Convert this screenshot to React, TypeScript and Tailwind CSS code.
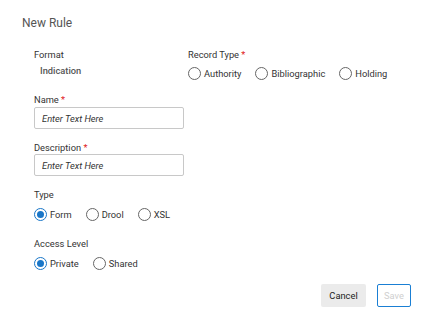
import React from 'react';

const Radio: React.FC<{ label: string; checked?: boolean }> = ({ label, checked }) => (
  <label className="flex items-center gap-[3px] text-[9.3px] leading-[13px] text-[#333]">
    <span
      className={
        checked
          ? 'w-[13px] h-[13px] rounded-full border border-[#1976c8] flex items-center justify-center'
          : 'w-[13px] h-[13px] rounded-full border border-[#666]'
      }
    >
      {checked && <span className="w-[7px] h-[7px] rounded-full bg-[#1976c8]" />}
    </span>
    <span>{label}</span>
  </label>
);

const Label: React.FC<{ text: string; required?: boolean }> = ({ text, required }) => (
  <div className="text-[9.3px] leading-[12px] text-[#333]">
    {text}
    {required && <span className="text-[#e02020]"> *</span>}
  </div>
);

const TextInput: React.FC = () => (
  <input
    type="text"
    placeholder="Enter Text Here"
    className="block w-[150px] h-[22px] border border-[#c8c8c8] rounded-[2px] px-[7px] text-[9.3px] italic text-[#333] placeholder:text-[#333] focus:outline-none"
  />
);

export default function App() {
  return (
    <div className="w-[432px] h-[322px] bg-white font-['Roboto',sans-serif] flex flex-col">
      <div className="pt-[15px] pl-[22px] text-[12px] leading-[16px] text-[#555]">New Rule</div>

      <div className="px-[34px] flex flex-col">
        <div className="mt-[18px] flex">
          <div className="w-[154px]">
            <Label text="Format" />
            <div className="mt-[4px] pl-[6px] text-[9.3px] leading-[12px] font-medium text-[#555]">Indication</div>
          </div>
          <div>
            <Label text="Record Type" required />
            <div className="mt-[6px] flex gap-[14px]">
              <Radio label="Authority" />
              <Radio label="Bibliographic" />
              <Radio label="Holding" />
            </div>
          </div>
        </div>

        <div className="mt-[14px]">
          <Label text="Name" required />
          <div className="mt-[1px]">
            <TextInput />
          </div>
        </div>

        <div className="mt-[13px]">
          <Label text="Description" required />
          <TextInput />
        </div>

        <div className="mt-[13px]">
          <Label text="Type" />
          <div className="mt-[7px] flex gap-[14px]">
            <Radio label="Form" checked />
            <Radio label="Drool" />
            <Radio label="XSL" />
          </div>
        </div>

        <div className="mt-[17px]">
          <Label text="Access Level" />
          <div className="mt-[7px] flex gap-[14px]">
            <Radio label="Private" checked />
            <Radio label="Shared" />
          </div>
        </div>
      </div>

      <div className="mt-[14px] pr-[21px] flex justify-end gap-[11px]">
        <button className="w-[45px] h-[23px] rounded-[2px] bg-[#ebebeb] text-[9.3px] text-[#222]">Cancel</button>
        <button className="w-[34px] h-[23px] rounded-[2px] border border-[#1a7fd4] bg-white text-[9.3px] text-[#cfcfcf]">Save</button>
      </div>
    </div>
  );
}
